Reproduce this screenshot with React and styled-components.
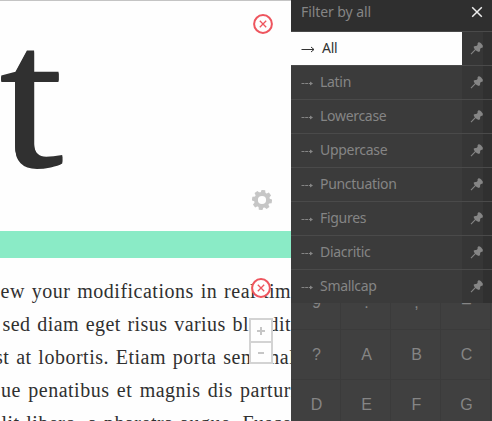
import React from "react";
import styled, { createGlobalStyle } from "styled-components";

const Global = createGlobalStyle`
  * { box-sizing: border-box; }
  body { margin: 0; background: #fefefe; overflow: hidden; }
`;
const Shell = styled.div`
  display: grid; grid-template-columns: 291px 201px;
  width: 492px; height: 421px; overflow: hidden; background: #fefefe;
`;
const Workspace = styled.main`
  display: flex; flex-direction: column; min-width: 0; height: 421px; overflow: hidden;
  color: #303030; font-family: "Liberation Serif", serif;
`;
const GlyphView = styled.section`
  position: relative; flex: 0 0 231px; overflow: hidden; border-top: 1px solid #c4c4c4;
`;
const Glyph = styled.div`
  width: 63px; font-size: 204px; line-height: 230px; height: 230px;
  transform-origin: 0 0; transform: translate(-1px, -20px) scaleX(1.14);
  text-shadow: 0 1px 0 #303030, 0 2px 0 #303030;
`;
const Divider = styled.div`flex: 0 0 27px; background: #8aebc6;`;
const TextView = styled.section`
  position: relative; flex: 1; padding-top: 17px; overflow: hidden;
`;
const Line = styled.p`
  margin: 0 0 0 ${(p) => p.$x}px; height: 33px; line-height: 33px; font-size: 20px;
  white-space: nowrap; letter-spacing: ${(p) => p.$ls}px; word-spacing: ${(p) => p.$ws || 0}px;
`;
const Floating = styled.div`
  position: absolute; left: ${(p) => p.$x}px; top: ${(p) => p.$y}px; display: flex;
`;
const Zoom = styled.div`
  position: absolute; left: 249px; top: 60px; width: 24px; height: 46px;
  display: grid; grid-template-rows: 1fr 1fr; border: 2px solid #d3d3d3; background: #fefefe;
`;
const ZoomButton = styled.button`
  display: grid; place-items: center; padding: 0; border: 0; background: none;
  & + & { border-top: 2px solid #d3d3d3; }
`;
const Sidebar = styled.aside`
  display: flex; flex-direction: column; height: 421px; overflow: hidden; background: #404040;
  color: #858585; font-family: "Noto Sans", sans-serif; font-size: 14px;
`;
const Header = styled.header`
  display: flex; justify-content: space-between; flex: 0 0 31px; padding: 0 9px 0 10px;
  background: #2f2f2f; line-height: 24px; letter-spacing: -0.08px;
  svg { margin-top: 6px; }
`;
const Item = styled.div`
  display: grid; grid-template-columns: 171px 30px; flex: 0 0 34px; border-top: 1px solid #4a4a4a;
`;
const Choice = styled.div`
  display: flex; align-items: center; padding-left: 10px; padding-bottom: 3px;
  background: ${(p) => (p.$active ? "#fefefe" : "#3b3b3b")};
  color: ${(p) => (p.$active ? "#333" : "#858585")};
  letter-spacing: -0.3px;
  svg { margin: 4px ${(p) => (p.$active ? 7 : 5)}px 0 0; }
`;
const PinButton = styled.div`
  display: flex; align-items: center; padding: 0 0 1px 8px;
  background: linear-gradient(90deg, #363636 21px, #303030 21px);
  color: #858585;
`;
const CharGrid = styled.div`
  display: grid; grid-template-columns: repeat(4, 50px); grid-auto-rows: 50px;
  flex: 1; overflow: hidden; font: 16px/50px "Liberation Sans", sans-serif;
  align-content: end; margin-bottom: -9px;
`;
const Char = styled.div`
  text-align: center; border-right: 1px solid #3b3b3b; border-bottom: 1px solid #3b3b3b;
  padding-left: 2px; line-height: ${(p) => p.$lh || 49}px;
`;

const CloseBadge = () => (
  <svg width="20" height="20" viewBox="0 0 20 20" fill="none" stroke="#ee555e">
    <circle cx="10" cy="10" r="8.9" fill="#fefefe" strokeWidth="2" />
    <path d="M6.8 6.8l6.4 6.4M13.2 6.8l-6.4 6.4" strokeWidth="1.3" />
  </svg>
);
const Gear = () => (
  <svg width="20" height="20" viewBox="-10 -10 20 20">
    <g fill="#c6c6c6">
      {[0, 45, 90, 135, 180, 225, 270, 315].map((a) => (
        <path key={a} d="M-2.7-6L-1.8-10H1.8L2.7-6Z" transform={`rotate(${a + 8})`} />
      ))}
    </g>
    <circle r="6" fill="none" stroke="#c6c6c6" strokeWidth="3.8" />
  </svg>
);
const Arrow = ({ active }) => (
  <svg width="14" height="8" viewBox="0 0 14 8" fill="none" stroke="currentColor">
    <path d={active ? "M.5 4.5H13M10 2l3 2.5L10 7" : "M.5 4.5H9"} strokeDasharray={active ? undefined : "3 .7"} />
    {!active && <path d="M9 2.5l3 2-3 2z" fill="currentColor" stroke="none" />}
  </svg>
);
const Pin = () => (
  <svg width="14" height="14" viewBox="0 0 14 14">
    <path d="M1 13.2L5.8 8.2" stroke="currentColor" strokeWidth="1.1" />
    <path d="M8.2 1.4Q9.3.8 11.2 2.4Q13.5 4.4 12.8 6.2Q12.1 7.1 10.8 7L10.1 8.2Q10.6 10 9.1 11Q7 10.7 5.4 9Q3.7 7.3 3.6 5.7Q4.7 4.6 6.3 5L7.6 3.9Q7.2 2.2 8.2 1.4Z" fill="currentColor" />
  </svg>
);
const Sign = ({ plus }) => (
  <svg width="8" height="8" viewBox="0 0 8 8" stroke="#c6c6c6" strokeWidth="2">
    <path d={plus ? "M0 4H8M4 0V8" : "M1 4H7"} />
  </svg>
);

const filters = ["All", "Latin", "Lowercase", "Uppercase", "Punctuation", "Figures", "Diacritic", "Smallcap"];
const chars = ["9", ".", ",", "–", "?", "A", "B", "C", "D", "E", "F", "G"];
const lines = [
  { text: "ew your modifications in real time", x: 0.5, ls: 0.5, ws: 1.4 },
  { text: "sed diam eget risus varius blandit", x: 2.5, ls: 0.42, ws: 1.4 },
  { text: "st at lobortis. Etiam porta sem malesuada", x: -5, ls: 0.5, ws: 1.3 },
  { text: "ue penatibus et magnis dis parturient", x: 1, ls: 0.5, ws: 1.9 },
  { text: "lit libero, a pharetra augue. Fusce", x: 1.5, ls: 0.5, ws: 1.1 },
];

export default function App() {
  return (
    <Shell>
      <Global />
      <Workspace>
        <GlyphView>
          <Glyph>t</Glyph>
          <Floating $x={253} $y={13}><CloseBadge /></Floating>
          <Floating $x={252} $y={189}><Gear /></Floating>
        </GlyphView>
        <Divider />
        <TextView>
          {lines.map((l) => <Line key={l.text} $x={l.x} $ls={l.ls} $ws={l.ws}>{l.text}</Line>)}
          <Floating $x={251} $y={20}><CloseBadge /></Floating>
          <Zoom>
            <ZoomButton aria-label="Zoom in"><Sign plus /></ZoomButton>
            <ZoomButton aria-label="Zoom out"><Sign /></ZoomButton>
          </Zoom>
        </TextView>
      </Workspace>
      <Sidebar>
        <Header>
          Filter by all
          <svg width="12" height="12" viewBox="0 0 12 12" stroke="#eee" strokeWidth="1.5">
            <path d="M1.2 1.2l9.6 9.6M10.8 1.2l-9.6 9.6" />
          </svg>
        </Header>
        {filters.map((f, i) => (
          <Item key={f}>
            <Choice $active={i === 0}><Arrow active={i === 0} />{f}</Choice>
            <PinButton><Pin /></PinButton>
          </Item>
        ))}
        <CharGrid>
          {chars.map((c, i) => <Char key={c} $lh={i < 4 ? 46 : 49}>{c}</Char>)}
        </CharGrid>
      </Sidebar>
    </Shell>
  );
}
